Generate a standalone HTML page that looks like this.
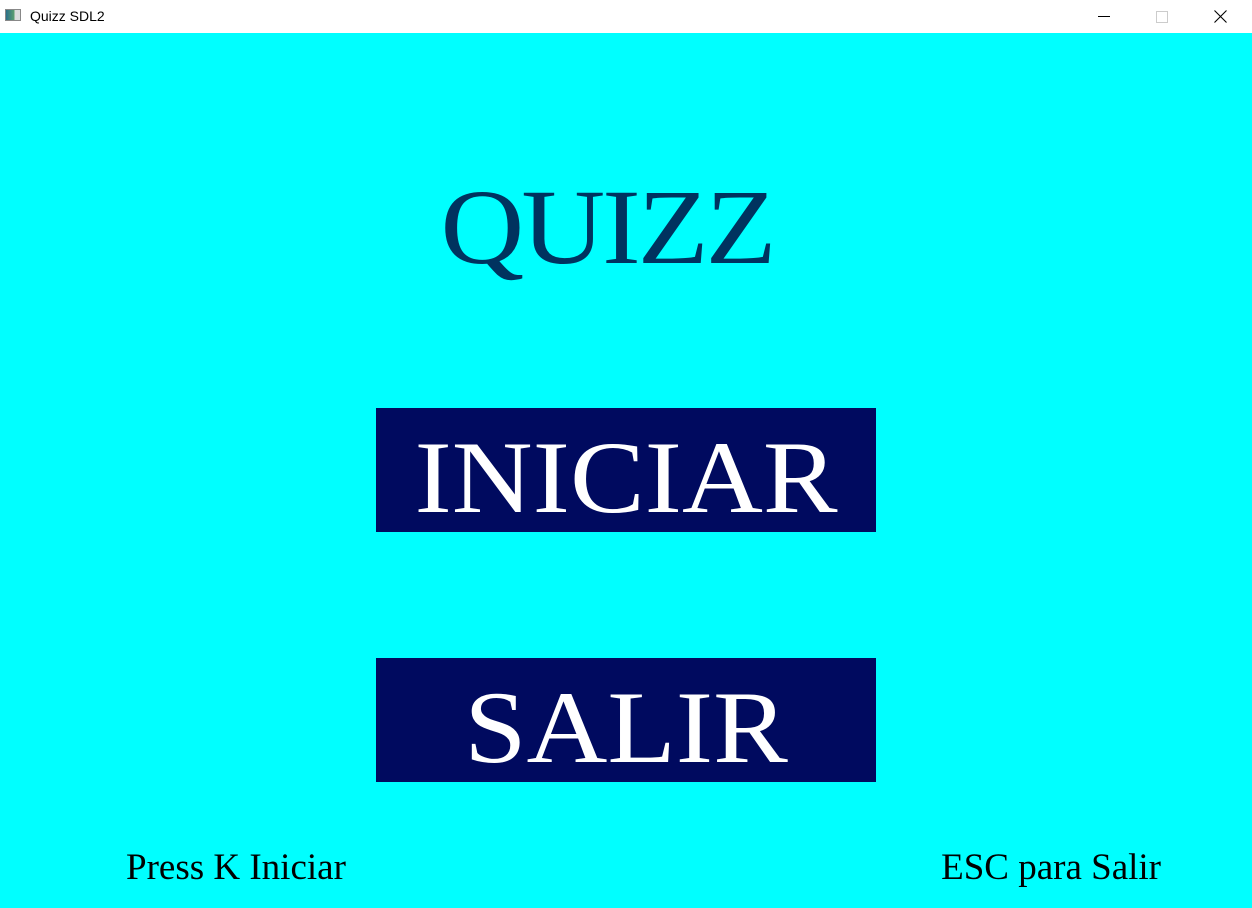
<!DOCTYPE html>
<html><head><style>
*{margin:0;padding:0}
body{width:1252px;height:908px;overflow:hidden;position:relative;background:#00ffff;font-family:"Liberation Serif",serif}
.tb{position:absolute;left:0;top:0;width:1252px;height:33px;background:#fff;border-bottom:0}
.t{position:absolute;white-space:nowrap}
.btn{position:absolute;left:376px;width:500px;height:124px;background:#000a5f}
</style></head><body>
<div class="tb">
  <div style="position:absolute;left:5px;top:9px;width:16px;height:12px;border:1px solid #888;background:linear-gradient(90deg,#2a6f8a 0,#5fa06f 60%,#ddd 60%);box-sizing:border-box"></div>
  <div class="t" style="left:30px;top:8px;font:14px 'Liberation Sans',sans-serif;color:#000">Quizz SDL2</div>
  <div style="position:absolute;left:1098px;top:16px;width:12px;height:1px;background:#000"></div>
  <div style="position:absolute;left:1156px;top:11px;width:10px;height:10px;border:1px solid #ccc"></div>
  <svg style="position:absolute;left:1214px;top:10px" width="13" height="13"><path d="M0.5 0.5L12.5 12.5M12.5 0.5L0.5 12.5" stroke="#000" stroke-width="1.1"/></svg>
</div>
<div class="t" style="left:0;width:1214px;text-align:center;top:167px;font-size:116px;line-height:116px;color:#00335f;letter-spacing:-3px;transform:scaleY(0.92);transform-origin:50% 97px">QUIZZ</div>
<div class="btn" style="top:408px"></div>
<div class="btn" style="top:658px"></div>
<div class="t" style="left:376px;width:500px;text-align:center;top:419px;font-size:112px;line-height:112px;color:#fff;transform:scaleY(0.92);transform-origin:50% 94px">INICIAR</div>
<div class="t" style="left:376px;width:500px;text-align:center;top:669px;font-size:112px;line-height:112px;color:#fff;transform:scaleY(0.92);transform-origin:50% 94px">SALIR</div>
<div class="t" style="left:126px;top:849px;font-size:37px;line-height:37px;color:#000">Press K Iniciar</div>
<div class="t" style="right:91px;top:849px;font-size:37px;line-height:37px;color:#000">ESC para Salir</div>
</body></html>
